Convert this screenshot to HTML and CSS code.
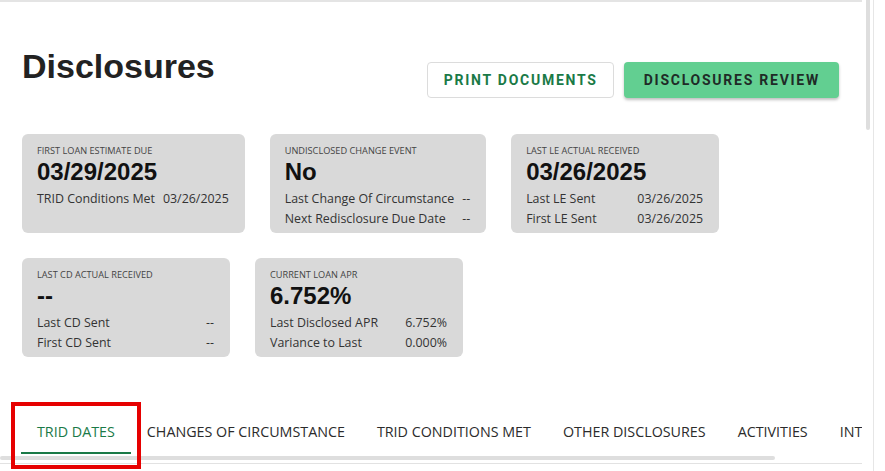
FILE: index.html
```html
<!DOCTYPE html>
<html>
<head>
<meta charset="utf-8">
<link rel="stylesheet" href="styles.css">
</head>
<body>
<div class="frame">
  <div class="main">
    <div class="header">
      <h1 class="title">Disclosures</h1>
      <div class="actions">
        <button class="btn btn-outline">PRINT DOCUMENTS</button>
        <button class="btn btn-primary">DISCLOSURES REVIEW</button>
      </div>
    </div>

    <div class="cards">
      <div class="card">
        <div class="card-label">FIRST LOAN ESTIMATE DUE</div>
        <div class="card-value">03/29/2025</div>
        <div class="card-row"><span>TRID Conditions Met</span><span>03/26/2025</span></div>
      </div>
      <div class="card">
        <div class="card-label">UNDISCLOSED CHANGE EVENT</div>
        <div class="card-value">No</div>
        <div class="card-row"><span>Last Change Of Circumstance</span><span>--</span></div>
        <div class="card-row"><span>Next Redisclosure Due Date</span><span>--</span></div>
      </div>
      <div class="card">
        <div class="card-label">LAST LE ACTUAL RECEIVED</div>
        <div class="card-value">03/26/2025</div>
        <div class="card-row"><span>Last LE Sent</span><span>03/26/2025</span></div>
        <div class="card-row"><span>First LE Sent</span><span>03/26/2025</span></div>
      </div>
      <div class="card">
        <div class="card-label">LAST CD ACTUAL RECEIVED</div>
        <div class="card-value">--</div>
        <div class="card-row"><span>Last CD Sent</span><span>--</span></div>
        <div class="card-row"><span>First CD Sent</span><span>--</span></div>
      </div>
      <div class="card">
        <div class="card-label">CURRENT LOAN APR</div>
        <div class="card-value">6.752%</div>
        <div class="card-row"><span>Last Disclosed APR</span><span>6.752%</span></div>
        <div class="card-row"><span>Variance to Last</span><span>0.000%</span></div>
      </div>
    </div>

    <div class="tabs-wrap">
      <div class="tabs">
        <div class="tab active">TRID DATES</div>
        <div class="tab">CHANGES OF CIRCUMSTANCE</div>
        <div class="tab">TRID CONDITIONS MET</div>
        <div class="tab">OTHER DISCLOSURES</div>
        <div class="tab">ACTIVITIES</div>
        <div class="tab">INT</div>
      </div>
      <div class="hscroll"><div class="hthumb"></div></div>
      <div class="tabs-line"></div>
      <div class="highlight"></div>
    </div>
  </div>
  <div class="vscroll"><div class="vthumb"></div></div>
  <div class="side"></div>
</div>
</body>
</html>
```

FILE: styles.css
```css
html, body {
  margin: 0;
  padding: 0;
  background: #ffffff;
}
body {
  width: 885px;
  height: 471px;
  overflow: hidden;
  font-family: "Open Sans", "Noto Sans", sans-serif;
  color: #333;
}
.frame {
  display: flex;
  height: 471px;
}
.main {
  width: 862px;
  flex: none;
  border-top: 2px solid #e4e4e4;
  padding-top: 44px;
  box-sizing: border-box;
  overflow: hidden;
}
.header {
  display: flex;
  justify-content: space-between;
  align-items: flex-start;
  padding: 0 23px 0 22px;
}
.title {
  margin: 0;
  font-family: "Liberation Sans", Arial, sans-serif;
  font-weight: 700;
  font-size: 34px;
  line-height: 40px;
  color: #222;
}
.actions {
  display: flex;
  gap: 10px;
  margin-top: 16px;
}
.btn {
  height: 36px;
  box-sizing: border-box;
  font-family: Roboto, "Liberation Sans", sans-serif;
  font-weight: 700;
  font-size: 14px;
  letter-spacing: 1.75px;
  border-radius: 4px;
  cursor: pointer;
}
.btn-outline {
  background: #fff;
  color: #1a7a47;
  border: 1px solid #dcdcdc;
  padding: 0 15px 0 16px;
}
.btn-primary {
  background: #62cf91;
  color: #1f2b27;
  border: none;
  padding: 0 19px 0 20px;
  box-shadow: 0 2px 3px rgba(0, 0, 0, 0.25);
}
.cards {
  display: flex;
  flex-wrap: wrap;
  column-gap: 25px;
  row-gap: 25px;
  padding: 0 22px;
  margin-top: 36px;
}
.card {
  background: #d9d9d9;
  border-radius: 6px;
  min-width: 208px;
  height: 99px;
  box-sizing: border-box;
  padding: 10px 16px 5px 15px;
}
.card-label {
  font-size: 9.2px;
  line-height: 14px;
  color: #444;
}
.card-value {
  font-family: "Liberation Sans", Arial, sans-serif;
  font-weight: 700;
  font-size: 24px;
  line-height: 28px;
  color: #111;
  margin-bottom: 3px;
}
.card-row {
  display: flex;
  justify-content: space-between;
  gap: 8px;
  font-size: 12.4px;
  line-height: 20px;
  color: #333;
}
.tabs-wrap {
  position: relative;
  margin-top: 53px;
}
.tabs {
  display: flex;
  padding-left: 21px;
  white-space: nowrap;
}
.tab {
  flex: none;
  height: 44px;
  box-sizing: border-box;
  padding: 0 16px;
  display: flex;
  align-items: center;
  font-size: 14.3px;
  font-weight: 500;
  color: #2b2b2b;
  border-bottom: 2px solid transparent;
}
.tab.active {
  color: #1a7a47;
  border-bottom-color: #1a7a47;
}
.hscroll {
  height: 7px;
  display: flex;
  align-items: center;
}
.hthumb {
  width: 775px;
  height: 4px;
  border-radius: 2px;
  background: #dedede;
}
.tabs-line {
  height: 1px;
  background: #e2e2e2;
  margin-top: 2px;
}
.highlight {
  position: absolute;
  left: 11px;
  top: -8px;
  width: 130px;
  height: 67px;
  box-sizing: border-box;
  border: 4px solid #e60000;
}
.vscroll {
  width: 11px;
  flex: none;
  display: flex;
  justify-content: center;
}
.vthumb {
  width: 4px;
  height: 130px;
  border-radius: 0 0 2px 2px;
  background: #dedede;
}
.side {
  flex: none;
  width: 12px;
  border-left: 1px solid #e6e6e6;
}
```
